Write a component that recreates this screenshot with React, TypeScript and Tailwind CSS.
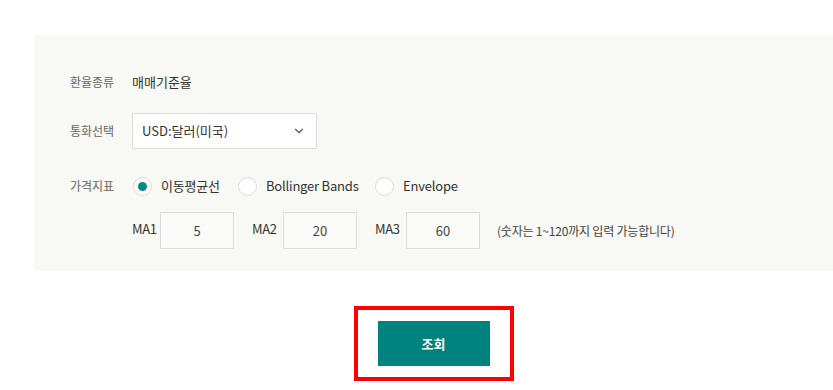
import { ChevronDown } from 'lucide-react'

const font = { fontFamily: '"Noto Sans CJK KR", "Noto Sans", sans-serif' }

function Radio({ label, checked, width }: { label: string; checked?: boolean; width: string }) {
  return (
    <div className={`flex items-center gap-[9px] ${width}`}>
      <span className="flex h-[19px] w-[19px] items-center justify-center rounded-full border border-[#dcdcdc] bg-white">
        {checked && <span className="h-[9px] w-[9px] rounded-full bg-[#0a8a86]" />}
      </span>
      <span className="text-[13px] tracking-[-0.2px] text-[#333]">{label}</span>
    </div>
  )
}

function MaField({ label, value, labelWidth }: { label: string; value: string; labelWidth: string }) {
  return (
    <div className="flex items-center gap-[5px]">
      <span className={`-mt-[4px] text-[13px] tracking-[-0.3px] text-[#333] ${labelWidth}`}>{label}</span>
      <div className="flex h-[37px] w-[74px] items-center justify-center border border-[#dcdcdc] bg-[#fafaf8] text-[13px] text-[#444]">
        {value}
      </div>
    </div>
  )
}

export default function App() {
  return (
    <div className="h-[390px] w-[833px] overflow-hidden bg-white" style={font}>
      <div className="ml-[34px] mt-[35px] h-[236px] bg-[#f8f8f5] pl-[36px] pt-[35px]">
        <div className="flex h-[24px] items-center">
          <span className="w-[62px] text-[12px] text-[#666]">환율종류</span>
          <span className="text-[13px] text-[#333]">매매기준율</span>
        </div>
        <div className="mt-[19px] flex h-[36px] items-center">
          <span className="w-[62px] text-[12px] text-[#666]">통화선택</span>
          <div className="flex h-[36px] w-[185px] items-center justify-between border border-[#dcdcdc] bg-white pl-[9px] pr-[10px] text-[13px] text-[#333]">
            <span>USD:달러(미국)</span>
            <ChevronDown size={14} strokeWidth={2} className="text-[#555]" />
          </div>
        </div>
        <div className="mt-[27px] flex h-[20px] items-center">
          <span className="w-[63px] text-[12px] text-[#666]">가격지표</span>
          <div className="flex items-center">
            <Radio label="이동평균선" checked width="w-[105px]" />
            <Radio label="Bollinger Bands" width="w-[137px]" />
            <Radio label="Envelope" width="w-[100px]" />
          </div>
        </div>
        <div className="mt-[16px] flex h-[37px] items-center pl-[62px]">
          <div className="flex items-center gap-[18px]">
            <MaField label="MA1" value="5" labelWidth="w-[23px]" />
            <MaField label="MA2" value="20" labelWidth="w-[26px]" />
            <MaField label="MA3" value="60" labelWidth="w-[26px]" />
          </div>
          <span className="ml-[17px] text-[12px] tracking-[-0.2px] text-[#444]">(숫자는 1~120까지 입력 가능합니다)</span>
        </div>
      </div>
      <div className="mt-[35px] flex justify-center pl-[34px]">
        <div className="border-[4px] border-[#ff0000] px-[20px] py-[11px]">
          <button className="h-[45px] w-[112px] bg-[#00827f] text-[13px] font-bold text-white">조회</button>
        </div>
      </div>
    </div>
  )
}
